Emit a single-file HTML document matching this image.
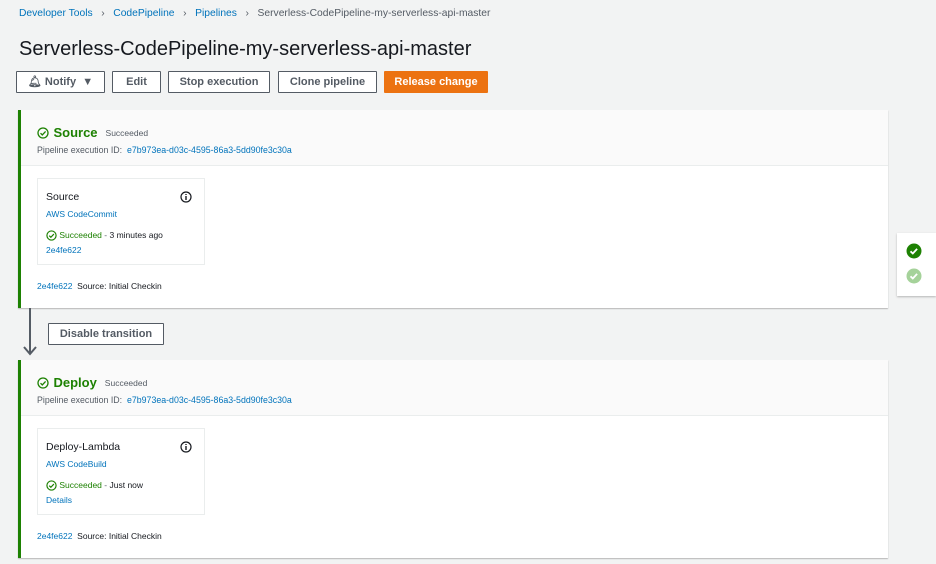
<!DOCTYPE html>
<html><head><style>
*{box-sizing:border-box;margin:0;padding:0}
body{width:936px;height:564px;background:#f2f3f3;font-family:"Liberation Sans",sans-serif;position:relative;overflow:hidden;color:#16191f}
.a{position:absolute}
.lnk{color:#0073bb}
.btn{position:absolute;top:71px;height:22px;border:1px solid #545b64;background:#fff;font-size:11px;font-weight:bold;color:#545b64;text-align:center;line-height:20px;border-radius:1px}
.stage{position:absolute;left:18px;width:870px;height:198px;background:#fff;border-left:3px solid #1d8102;box-shadow:0 1px 1px rgba(0,0,0,.25)}
.hd{height:56px;background:#fafafa;border-bottom:1px solid #eaeded;padding:14px 0 0 16px}
.hd .t{font-size:13px;font-weight:bold;color:#1d8102;display:inline-block;vertical-align:middle}
.hd .s{font-size:8.5px;color:#545b64;margin-left:8px;vertical-align:middle}
.hd .id{font-size:8.8px;color:#545b64;margin-top:3px}
.card{position:absolute;left:16px;top:68px;width:168px;height:87px;border:1px solid #eaeded;padding:12px 8px;font-size:8.5px}
.card .n{font-size:10.5px;color:#16191f;margin-bottom:6px}
.foot{position:absolute;left:16px;top:171px;font-size:8.5px}
.ok{display:inline-block;width:11px;height:11px;vertical-align:middle}
</style></head><body>
<div class="a" style="left:19px;top:8px;font-size:10.3px;color:#545b64">
<span class="lnk">Developer Tools</span>&nbsp;&nbsp;&nbsp;›&nbsp;&nbsp;&nbsp;<span class="lnk">CodePipeline</span>&nbsp;&nbsp;&nbsp;›&nbsp;&nbsp;&nbsp;<span class="lnk">Pipelines</span>&nbsp;&nbsp;&nbsp;›&nbsp;&nbsp;&nbsp;Serverless-CodePipeline-my-serverless-api-master</div>
<div class="a" style="left:19px;top:38px;font-size:20px;color:#16191f">Serverless-CodePipeline-my-serverless-api-master</div>
<div class="btn" style="left:16px;width:89px">🔔︎ Notify&nbsp;&nbsp;▼</div>
<div class="btn" style="left:112px;width:49px">Edit</div>
<div class="btn" style="left:168px;width:102px">Stop execution</div>
<div class="btn" style="left:278px;width:99px">Clone pipeline</div>
<div class="btn" style="left:384px;width:104px;background:#ec7211;border-color:#ec7211;color:#fff">Release change</div>

<div class="stage" style="top:110px">
<div class="hd"><svg class="ok" viewBox="0 0 12 12" style="width:12px;height:12px"><circle cx="6" cy="6" r="5" fill="none" stroke="#1d8102" stroke-width="1.3"/><path d="M3.5 6.2l1.8 1.7 3.3-3.5" fill="none" stroke="#1d8102" stroke-width="1.3"/></svg> <span class="t">Source</span><span class="s">Succeeded</span>
<div class="id">Pipeline execution ID:&nbsp; <span class="lnk">e7b973ea-d03c-4595-86a3-5dd90fe3c30a</span></div></div>
<div class="card"><div class="n">Source</div><div class="lnk">AWS CodeCommit</div>
<div style="margin-top:11px"><svg class="ok" viewBox="0 0 12 12"><circle cx="6" cy="6" r="5" fill="none" stroke="#1d8102" stroke-width="1.3"/><path d="M3.5 6.2l1.8 1.7 3.3-3.5" fill="none" stroke="#1d8102" stroke-width="1.3"/></svg> <span style="color:#1d8102">Succeeded</span> <span style="color:#545b64">-</span> 3 minutes ago</div>
<div class="lnk" style="margin-top:4px">2e4fe622</div>
<svg class="a" style="left:142px;top:12px" width="12" height="12" viewBox="0 0 12 12"><circle cx="6" cy="6" r="5" fill="none" stroke="#16191f" stroke-width="1.2"/><path d="M6 5v4M6 3v1" stroke="#16191f" stroke-width="1.4"/></svg></div>
<div class="foot"><span class="lnk">2e4fe622</span>&nbsp; Source: Initial Checkin</div>
</div>

<div class="a" style="left:29px;top:308px;width:2px;height:46px;background:#545b64"></div>
<svg class="a" style="left:22px;top:345px" width="16" height="12"><path d="M2 2l6 7 6-7" fill="none" stroke="#545b64" stroke-width="2"/></svg>
<div class="btn" style="left:48px;top:323px;width:116px">Disable transition</div>

<div class="stage" style="top:360px">
<div class="hd"><svg class="ok" viewBox="0 0 12 12" style="width:12px;height:12px"><circle cx="6" cy="6" r="5" fill="none" stroke="#1d8102" stroke-width="1.3"/><path d="M3.5 6.2l1.8 1.7 3.3-3.5" fill="none" stroke="#1d8102" stroke-width="1.3"/></svg> <span class="t">Deploy</span><span class="s">Succeeded</span>
<div class="id">Pipeline execution ID:&nbsp; <span class="lnk">e7b973ea-d03c-4595-86a3-5dd90fe3c30a</span></div></div>
<div class="card"><div class="n">Deploy-Lambda</div><div class="lnk">AWS CodeBuild</div>
<div style="margin-top:11px"><svg class="ok" viewBox="0 0 12 12"><circle cx="6" cy="6" r="5" fill="none" stroke="#1d8102" stroke-width="1.3"/><path d="M3.5 6.2l1.8 1.7 3.3-3.5" fill="none" stroke="#1d8102" stroke-width="1.3"/></svg> <span style="color:#1d8102">Succeeded</span> <span style="color:#545b64">-</span> Just now</div>
<div class="lnk" style="margin-top:4px">Details</div>
<svg class="a" style="left:142px;top:12px" width="12" height="12" viewBox="0 0 12 12"><circle cx="6" cy="6" r="5" fill="none" stroke="#16191f" stroke-width="1.2"/><path d="M6 5v4M6 3v1" stroke="#16191f" stroke-width="1.4"/></svg></div>
<div class="foot"><span class="lnk">2e4fe622</span>&nbsp; Source: Initial Checkin</div>
</div>

<div class="a" style="left:897px;top:233px;width:39px;height:63px;background:#fff;box-shadow:0 1px 2px rgba(0,0,0,.25)"></div>
<svg class="a" style="left:906px;top:243px" width="16" height="16"><circle cx="8" cy="8" r="7.5" fill="#1d8102"/><path d="M4.5 8.3l2.3 2.2 4.3-4.6" fill="none" stroke="#fff" stroke-width="1.8"/></svg>
<svg class="a" style="left:906px;top:268px" width="16" height="16"><circle cx="8" cy="8" r="7.5" fill="#a5d29a"/><path d="M4.5 8.3l2.3 2.2 4.3-4.6" fill="none" stroke="#fff" stroke-width="1.8"/></svg>
</body></html>
